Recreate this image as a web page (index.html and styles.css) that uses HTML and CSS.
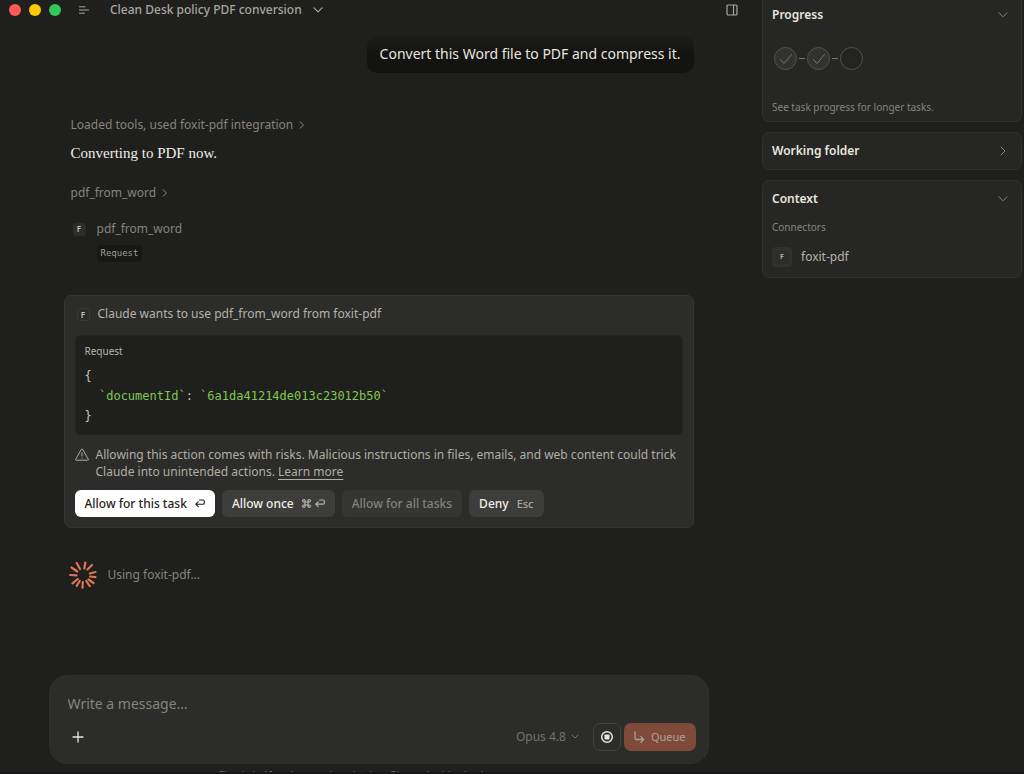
FILE: index.html
```
<!DOCTYPE html>
<html lang="en">
<head>
<meta charset="utf-8">
<meta name="viewport" content="width=device-width, initial-scale=1">
<title>Clean Desk policy PDF conversion</title>
<link rel="stylesheet" href="styles.css">
</head>
<body>
<div class="app">
  <main class="main">
    <header class="topbar">
      <div class="lights"><span class="light red"></span><span class="light yellow"></span><span class="light green"></span></div>
      <button class="plain menu" aria-label="Toggle sidebar">
        <svg width="10" height="8" viewBox="0 0 10 8" fill="none" stroke="currentColor" stroke-linecap="round"><path d="M.5 .8h5.5M.5 4h9M.5 7.200h5"/></svg>
      </button>
      <button class="plain title">Clean Desk policy PDF conversion
        <svg width="10" height="6" viewBox="0 0 10 6" fill="none" stroke="currentColor" stroke-width="1.200" stroke-linecap="round" stroke-linejoin="round"><path d="M1 .8l4 4 4-4"/></svg>
      </button>
      <button class="plain panel-toggle" aria-label="Toggle panel">
        <svg width="12" height="12" viewBox="0 0 12 12" fill="none" stroke="currentColor" stroke-width="1.200"><rect x="1" y="1" width="10" height="10" rx="1"/><path d="M7.500 1v10"/></svg>
      </button>
    </header>

    <section class="thread">
      <p class="bubble">Convert this Word file to PDF and compress it.</p>
      <button class="plain step">Loaded tools, used foxit-pdf integration
        <svg width="6" height="8" viewBox="0 0 6 8" fill="none" stroke="currentColor" stroke-linecap="round" stroke-linejoin="round"><path d="M1 .8l3.500 3.200L1 7.200"/></svg>
      </button>
      <p class="reply">Converting to PDF now.</p>
      <button class="plain step tool-step">pdf_from_word
        <svg width="6" height="8" viewBox="0 0 6 8" fill="none" stroke="currentColor" stroke-linecap="round" stroke-linejoin="round"><path d="M1 .8l3.500 3.200L1 7.200"/></svg>
      </button>
      <div class="call">
        <span class="badge">F</span>
        <span class="call-name">pdf_from_word</span>
        <span class="chip">Request</span>
      </div>

      <section class="permission">
        <h2 class="permission-title"><span class="badge outlined">F</span>Claude wants to use pdf_from_word from foxit-pdf</h2>
        <div class="request">
          <h3 class="request-title">Request</h3>
          <pre class="code">{
  <span class="str">`documentId`</span>: <span class="str">`6a1da41214de013c23012b50`</span>
}</pre>
        </div>
        <div class="warning">
          <svg width="14" height="13" viewBox="0 0 14 13" fill="none" stroke="currentColor" stroke-linecap="round" stroke-linejoin="round"><path d="M6.500 1.100a.6 .6 0 0 1 1 0l5.800 10.200a.6 .6 0 0 1-.5 .9H1.200a.6 .6 0 0 1-.5-.9zM7 4.800v3.200M7 9.900v.2"/></svg>
          <p class="warning-text">Allowing this action comes with risks. Malicious instructions in files, emails, and web content could trick Claude into unintended actions. <a class="link" href="#">Learn more</a></p>
        </div>
        <div class="actions">
          <button class="btn primary">Allow for this task
            <svg width="10" height="9" viewBox="0 0 10 9" fill="none" stroke="currentColor" stroke-width="1.100" stroke-linecap="round" stroke-linejoin="round"><path d="M4.500 1H8a1.300 1.300 0 0 1 1.300 1.300v1.600A1.300 1.300 0 0 1 8 5.200H1M3.200 2.900L.8 5.200l2.400 2.400"/></svg>
          </button>
          <button class="btn">Allow once
            <span class="keys">
            <svg width="9" height="9" viewBox="0 0 9 9" fill="none" stroke="currentColor" stroke-width="1.200"><path d="M3 3V2a1.200 1.200 0 1 0-1.200 1H7.200A1.200 1.200 0 1 0 6 2v5a1.200 1.200 0 1 0 1.200-1H1.800A1.200 1.200 0 1 0 3 7z"/></svg>
            <svg width="10" height="9" viewBox="0 0 10 9" fill="none" stroke="currentColor" stroke-width="1.200" stroke-linecap="round" stroke-linejoin="round"><path d="M4.500 1H8a1.300 1.300 0 0 1 1.300 1.300v1.600A1.300 1.300 0 0 1 8 5.200H1M3.200 2.900L.8 5.200l2.400 2.400"/></svg>
            </span>
          </button>
          <button class="btn" disabled>Allow for all tasks</button>
          <button class="btn">Deny <kbd class="esc">Esc</kbd></button>
        </div>
      </section>

      <div class="status">
        <svg width="28" height="28" viewBox="-14 -14 28 28" stroke="#d97757" stroke-width="2.200" stroke-linecap="round"><path d="M1.300-6.500L2.300-12.500M4.500-5.500L9-10M6.800-1.500L12.500-3M7 1.500L12.500 2.200M5.500 4.500L10.500 8M3.300 6L6.800 11.200M-.2 7L-.5 12.800M-3.300 6L-6.300 10.800M-5.200 4L-10.500 8.300M-6.500 .3L-12.800 0M-5.700-3.500L-11.500-7.500M-3-6L-6.300-12"/></svg>
        <span>Using foxit-pdf…</span>
      </div>
    </section>

    <form class="composer">
      <input class="message" type="text" placeholder="Write a message…" aria-label="Write a message">
      <div class="tools">
        <button class="plain add" type="button" aria-label="Add">
          <svg width="12" height="12" viewBox="0 0 12 12" fill="none" stroke="currentColor" stroke-width="1.300" stroke-linecap="round"><path d="M6 1v10M1 6h10"/></svg>
        </button>
        <button class="plain model" type="button">Opus 4.8
          <svg width="8" height="6" viewBox="0 0 8 6" fill="none" stroke="currentColor" stroke-linecap="round" stroke-linejoin="round"><path d="M1 1l3 3 3-3"/></svg>
        </button>
        <button class="stop" type="button" aria-label="Stop">
          <svg width="14" height="14" viewBox="0 0 14 14"><circle cx="7" cy="7" r="5.300" fill="none" stroke="currentColor" stroke-width="1.500"/><rect x="4.500" y="4.500" width="5" height="5" rx=".8" fill="currentColor"/></svg>
        </button>
        <button class="queue" type="button">
          <svg width="11" height="12" viewBox="0 0 11 12" fill="none" stroke="currentColor" stroke-width="1.300" stroke-linecap="round" stroke-linejoin="round"><path d="M1 1v6.500a1 1 0 0 0 1 1h7.500M7 5.800l2.700 2.700L7 11.200"/></svg>
          Queue</button>
      </div>
    </form>
    <footer class="disclaimer">Claude is AI and can make mistakes. Please double-check responses.</footer>
  </main>

  <aside class="side">
    <section class="card progress">
      <h2 class="card-title">Progress
        <svg width="10" height="6" viewBox="0 0 10 6" fill="none" stroke="currentColor" stroke-linecap="round" stroke-linejoin="round"><path d="M1 .8l4 4 4-4"/></svg>
      </h2>
      <div class="steps">
        <span class="dot done"><svg width="14" height="12" viewBox="0 0 14 12" fill="none" stroke="currentColor" stroke-linecap="round" stroke-linejoin="round"><path d="M1.500 6.500l3.500 4L12.500 1.500"/></svg></span>
        <span class="dash"></span>
        <span class="dot done"><svg width="14" height="12" viewBox="0 0 14 12" fill="none" stroke="currentColor" stroke-linecap="round" stroke-linejoin="round"><path d="M1.500 6.500l3.500 4L12.500 1.500"/></svg></span>
        <span class="dash"></span>
        <span class="dot"></span>
      </div>
      <p class="hint">See task progress for longer tasks.</p>
    </section>
    <section class="card">
      <h2 class="card-title">Working folder
        <svg class="right" width="6" height="10" viewBox="0 0 6 10" fill="none" stroke="currentColor" stroke-linecap="round" stroke-linejoin="round"><path d="M1 1l4 4-4 4"/></svg>
      </h2>
    </section>
    <section class="card">
      <h2 class="card-title">Context
        <svg width="10" height="6" viewBox="0 0 10 6" fill="none" stroke="currentColor" stroke-linecap="round" stroke-linejoin="round"><path d="M1 .8l4 4 4-4"/></svg>
      </h2>
      <h3 class="label">Connectors</h3>
      <div class="connector"><span class="tile"><span class="badge small">F</span></span>foxit-pdf</div>
    </section>
  </aside>
</div>
</body>
</html>
```
FILE: styles.css
```
* { box-sizing: border-box; }
body {
  margin: 0;
  background: #1f1f1d;
  color: #e8e6df;
  font: 12px/16px "Noto Sans", "Open Sans", sans-serif;
}
h2, h3, p, pre { margin: 0; font-weight: 400; }
button, input { font: inherit; color: inherit; }
svg { flex: none; display: block; }
.plain { border: 0; padding: 0; background: none; display: flex; align-items: center; }

.app {
  display: flex;
  gap: 5px;
  height: 100vh;
  padding-right: 2px;
  overflow: hidden;
  border-bottom: 2px solid #19151a;
}
.main {
  flex: 1;
  min-width: 0;
  display: flex;
  flex-direction: column;
}

.topbar {
  display: flex;
  align-items: center;
  height: 20px;
  padding: 0 19px 0 9px;
  color: #a9a79f;
}
.lights { display: flex; gap: 8px; }
.light { width: 12px; height: 12px; border-radius: 50%; }
.red { background: #ff5a57; }
.yellow { background: #fdc804; }
.green { background: #32c759; }
.menu { margin-left: 18px; }
.title { margin-left: 21px; gap: 11px; font-weight: 500; }
.panel-toggle { margin-left: auto; }

.thread {
  flex: 1;
  width: 100%;
  max-width: 630px;
  margin: 0 auto;
  padding-top: 16px;
  display: flex;
  flex-direction: column;
  align-items: flex-start;
}
.bubble {
  align-self: flex-end;
  padding: 7px 13px 9px;
  border-radius: 10px;
  background: linear-gradient(#1d1d1b, #131312 50%);
  font-size: 14px;
  line-height: 21px;
}
.step { margin: 44px 0 0 7px; gap: 6px; color: #86847c; }
.reply {
  margin: 10px 0 0 7px;
  font: 15px/20px "Liberation Serif", serif;
  color: #f0eee7;
}
.tool-step { margin-top: 22px; }
.call {
  display: grid;
  grid-template-columns: 13px auto;
  column-gap: 11px;
  row-gap: 8px;
  align-items: center;
  justify-items: start;
  margin: 20px 0 0 9px;
  color: #86847c;
}
.badge {
  display: grid;
  place-items: center;
  width: 13px;
  height: 13px;
  border-radius: 3px;
  background: #2c2c2a;
  color: #c3c1b8;
  font-size: 8px;
  font-weight: 600;
  line-height: 12px;
}
.outlined { border: 1px solid #383836; }
.chip {
  grid-column: 2;
  padding: 0 4px;
  border-radius: 4px;
  background: #171716;
  color: #a09e96;
  font: 9px/17px "DejaVu Sans Mono", monospace;
}

.permission {
  align-self: stretch;
  margin-top: 33px;
  padding: 10px;
  border: 1px solid #353533;
  border-radius: 7px;
  background: #2c2c2a;
}
.permission-title {
  display: flex;
  align-items: center;
  gap: 8px;
  padding-left: 2px;
  color: #b5b3aa;
  font-size: 12px;
}
.request {
  margin-top: 13px;
  padding: 8px 9px;
  border: 1px solid #252523;
  border-radius: 5px;
  background: #1f1f1d;
}
.request-title { font-size: 10px; line-height: 14px; color: #b5b3aa; }
.code {
  margin-top: 8px;
  font: 12px/20px "DejaVu Sans Mono", monospace;
  color: #c8c6be;
}
.str { color: #7fc950; }
.warning {
  display: flex;
  gap: 7px;
  margin-top: 11px;
  color: #b0aea5;
}
.warning svg { margin-top: 2px; }
.warning-text { line-height: 17px; }
.link { color: inherit; text-decoration: underline; text-underline-offset: 3px; }
.actions { display: flex; flex-wrap: wrap; gap: 7px; margin-top: 10px; }
.btn {
  display: flex;
  align-items: center;
  gap: 8px;
  height: 27px;
  padding: 0 10px;
  border: 0;
  border-radius: 6px;
  background: #3d3d3b;
  color: #f0eee8;
  font-weight: 500;
}
.btn:disabled { background: #353533; color: #82817c; }
.primary { background: #fff; color: #1f1f1d; }
.keys { display: flex; gap: 4px; color: #b5b3ac; }
.esc { font: inherit; font-size: 11px; color: #a9a7a0; }

.status {
  display: flex;
  align-items: center;
  gap: 11px;
  margin: 33px 0 0 5px;
  color: #86847c;
}

.composer {
  width: 100%;
  max-width: 660px;
  margin: 0 auto;
  padding: 16px 12px 12px 18px;
  border: 1px solid #2f2f2d;
  border-radius: 18px;
  background: #2c2c2a;
}
.message {
  width: 100%;
  height: 22px;
  padding: 0;
  border: 0;
  outline: 0;
  background: none;
  font-size: 14px;
}
.message::placeholder { color: #86847b; opacity: 1; }
.tools { display: flex; align-items: center; margin-top: 9px; }
.add { margin-left: 4px; }
.model { margin-left: auto; gap: 5px; color: #73726b; }
.stop {
  display: grid;
  place-items: center;
  width: 28px;
  height: 28px;
  margin: 0 3px 0 14px;
  padding: 0;
  border: 1px solid #41413f;
  border-radius: 7px;
  background: none;
}
.queue {
  display: flex;
  align-items: center;
  gap: 6px;
  height: 28px;
  padding: 0 10px;
  border: 0;
  border-radius: 7px;
  background: #7f4a39;
  color: #aaa19b;
  font-size: 11px;
}
.disclaimer {
  height: 8px;
  padding-top: 3px;
  overflow: hidden;
  text-align: center;
  color: #73726b;
  font-size: 10px;
}

.side {
  width: 260px;
  flex: none;
  display: flex;
  flex-direction: column;
  gap: 10px;
}
.card {
  padding: 10px 13px 10px 9px;
  border: 1px solid #30302e;
  border-radius: 7px;
  background: #262625;
}
.progress { border-top: 0; border-radius: 0 0 7px 7px; padding-top: 7px; padding-bottom: 6px; }
.card-title {
  display: flex;
  align-items: center;
  justify-content: space-between;
  font-size: 12px;
  font-weight: 600;
}
.card-title svg { color: #86847c; }
.right { margin-right: 2px; }
.steps { display: flex; align-items: center; margin: 24px 0 0 2px; }
.dot {
  display: grid;
  place-items: center;
  width: 23px;
  height: 23px;
  border: 1px solid #51514e;
  border-radius: 50%;
  background: #232322;
  color: #75756f;
}
.done { background: #32322f; }
.dash { width: 6px; height: 1px; margin: 0 2px; background: #75756f; }
.hint { margin-top: 29px; font-size: 10px; color: #86847c; }
.label { margin-top: 12px; font-size: 10px; color: #86847c; }
.connector {
  display: flex;
  align-items: center;
  gap: 9px;
  margin-top: 12px;
  color: #b5b3aa;
}
.tile {
  display: grid;
  place-items: center;
  width: 20px;
  height: 20px;
  border-radius: 4px;
  background: #30302e;
}
.small { font-size: 7px; }
```
